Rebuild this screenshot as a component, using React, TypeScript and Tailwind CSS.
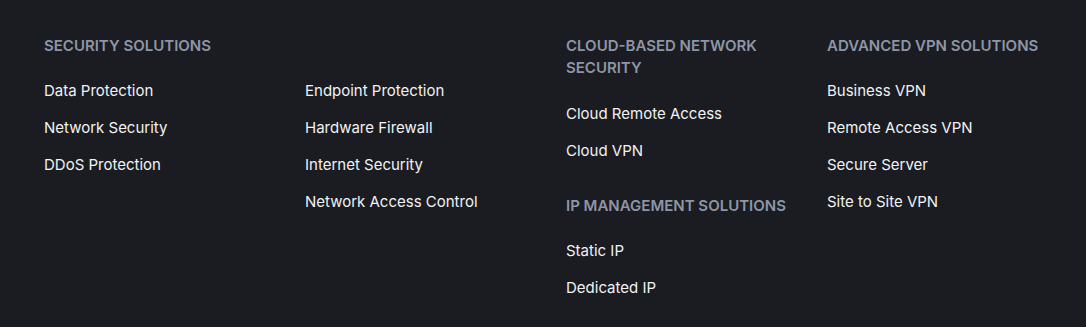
const COL_A = ["Data Protection", "Network Security", "DDoS Protection"];
const COL_B = ["Endpoint Protection", "Hardware Firewall", "Internet Security", "Network Access Control"];
const CLOUD = ["Cloud Remote Access", "Cloud VPN"];
const IPM = ["Static IP", "Dedicated IP"];
const VPN = ["Business VPN", "Remote Access VPN", "Secure Server", "Site to Site VPN"];

function Heading({ children, tall }: { children: React.ReactNode; tall?: boolean }) {
  return (
    <h3 className={"text-[15px] leading-[22px] font-semibold uppercase text-[#8d96a7] " + (tall ? "mb-[24px]" : "mb-[23px]")}>{children}</h3>
  );
}

function Links({ items }: { items: string[] }) {
  return (
    <ul className="flex flex-col gap-[15px]">
      {items.map(t => (
        <li key={t} className="text-[15px] leading-[22px]">
          <a href="#" className="block w-fit text-[#f1f2f4] hover:text-white">{t}</a>
        </li>
      ))}
    </ul>
  );
}

export default function App() {
  return (
    <footer
      className="w-full min-h-[327px] bg-[#1a1c21] pl-[44px] pt-[35px] pb-[28px]"
      style={{ fontFamily: "Inter, 'Noto Sans', sans-serif" }}
    >
      <div className="grid grid-cols-[261px_261px_261px_1fr]">
        <div className="col-span-2">
          <Heading>Security Solutions</Heading>
          <div className="grid grid-cols-[261px_261px]">
            <Links items={COL_A} />
            <Links items={COL_B} />
          </div>
        </div>
        <div>
          <Heading tall>Cloud-Based Network<br />Security</Heading>
          <Links items={CLOUD} />
          <div className="mt-[33px]">
            <Heading>IP Management Solutions</Heading>
            <Links items={IPM} />
          </div>
        </div>
        <div>
          <Heading>Advanced VPN Solutions</Heading>
          <Links items={VPN} />
        </div>
      </div>
    </footer>
  );
}
